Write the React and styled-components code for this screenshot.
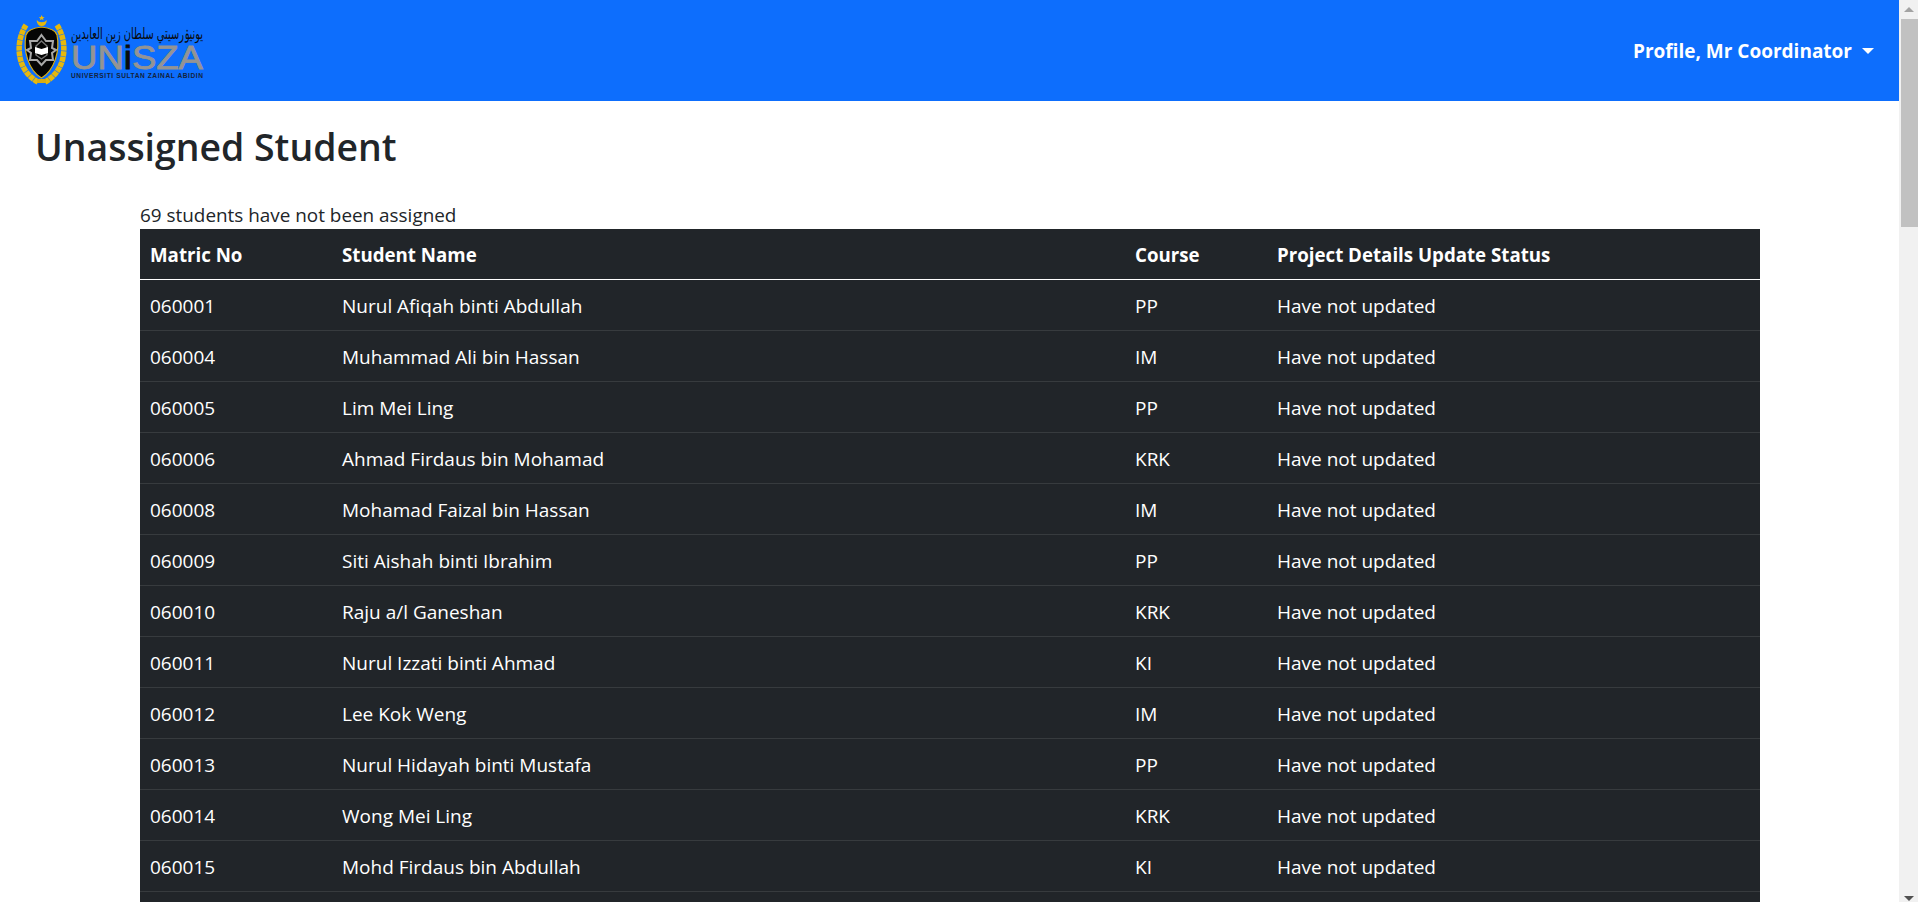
import React from 'react';
import styled, { createGlobalStyle } from 'styled-components';

const GlobalStyle = createGlobalStyle`
  html, body {
    margin: 0;
    padding: 0;
    background: #fff;
    font-family: "Open Sans", "Noto Sans", sans-serif;
    color: #212529;
  }
  *, *::before, *::after { box-sizing: border-box; }
`;

const Page = styled.div`
  display: flex;
  height: 100vh;
  overflow: hidden;
`;

const Scroller = styled.div`
  flex: 1;
  min-width: 0;
  overflow-y: auto;
`;

const Rail = styled.aside`
  width: 19px;
  flex-shrink: 0;
  display: flex;
  flex-direction: column;
  background: #f1f1f1;
`;

const RailArrow = styled.div`
  height: 19px;
  flex-shrink: 0;
  display: flex;
  justify-content: center;
  align-items: ${p => (p.$down ? 'flex-end' : 'center')};
  padding-bottom: ${p => (p.$down ? '1px' : '0')};
  &::before {
    content: '';
    border-left: 5px solid transparent;
    border-right: 5px solid transparent;
    border-top: ${p => (p.$down ? '5px solid #505050' : '0')};
    border-bottom: ${p => (p.$down ? '0' : '5px solid #a3a3a3')};
  }
`;

const RailThumb = styled.div`
  height: 208px;
  margin-left: 2px;
  flex-shrink: 0;
  background: #c1c1c1;
`;

const RailGap = styled.div`
  flex: 1;
`;

const NavBar = styled.nav`
  height: 101px;
  background: #0d6efd;
  display: flex;
  align-items: center;
  justify-content: space-between;
  padding: 0 25px 0 14px;
`;

const ProfileToggle = styled.button`
  display: flex;
  align-items: center;
  background: none;
  border: 0;
  padding: 0;
  color: #fff;
  font: 700 19px "Open Sans", sans-serif;
  &::after {
    content: '';
    margin-left: 10px;
    border-top: 6px solid #fff;
    border-left: 6px solid transparent;
    border-right: 6px solid transparent;
  }
`;

const Main = styled.main`
  padding: 0 36px;
`;

const Title = styled.h1`
  margin: 0 0 0 -1px;
  padding-top: 22px;
  font-size: 37.4px;
  line-height: 48px;
  font-weight: 600;
`;

const Content = styled.section`
  margin: 30px 0 0 104px;
  width: 1620px;
`;

const Count = styled.div`
  font-size: 18.9px;
  line-height: 28px;
`;

const Table = styled.table`
  width: 100%;
  border-collapse: separate;
  border-spacing: 0;
  background: #212529;
  color: #fff;
  font-size: 19px;
  table-layout: fixed;
`;

const Head = styled.th`
  height: 51px;
  padding: 0 10px;
  text-align: left;
  font-size: 18.7px;
  font-weight: 700;
  border-bottom: 1px solid #fff;
  width: ${p => p.$w};
`;

const Cell = styled.td`
  height: 51px;
  padding: 1px 10px 0;
  border-bottom: 1px solid #373b3e;
`;

const students = [
  ['060001', 'Nurul Afiqah binti Abdullah', 'PP'],
  ['060004', 'Muhammad Ali bin Hassan', 'IM'],
  ['060005', 'Lim Mei Ling', 'PP'],
  ['060006', 'Ahmad Firdaus bin Mohamad', 'KRK'],
  ['060008', 'Mohamad Faizal bin Hassan', 'IM'],
  ['060009', 'Siti Aishah binti Ibrahim', 'PP'],
  ['060010', 'Raju a/l Ganeshan', 'KRK'],
  ['060011', 'Nurul Izzati binti Ahmad', 'KI'],
  ['060012', 'Lee Kok Weng', 'IM'],
  ['060013', 'Nurul Hidayah binti Mustafa', 'PP'],
  ['060014', 'Wong Mei Ling', 'KRK'],
  ['060015', 'Mohd Firdaus bin Abdullah', 'KI'],
];

// viewBox is in page pixels, so the numbers below read straight off the screenshot
const UniszaLogo = () => (
  <svg width="192" height="73" viewBox="14 14 192 73">
    <path d="M26 25 C15 42 16 70 38 82" fill="none" stroke="#e6b80c" strokeWidth="5.5" strokeDasharray="5 .5" />
    <path d="M57 25 C68 42 67 70 45 82" fill="none" stroke="#e6b80c" strokeWidth="5.5" strokeDasharray="5 .5" />
    <rect x="37" y="79" width="9" height="4" fill="#d9ad12" />
    <path d="M41.5 27 C33 28 27 31 26 35 C23 50 28 70 41.5 78 C55 70 60 50 57 35 C56 31 50 28 41.5 27Z" fill="#050505" stroke="#d9ad12" strokeWidth="1.2" />
    <path d="M41.5 35 L46 41 L53 41 L52 48 L56 50 L52 53 L53 60 L46 60 L41.5 65 L37 60 L30 60 L31 53 L27 50 L31 48 L30 41 L37 41Z" fill="none" stroke="#a8a8a8" strokeWidth="2" />
    <path d="M41.5 41 L47 46 L47 55 L41.5 59 L36 55 L36 46Z" fill="none" stroke="#777" strokeWidth="1.4" />
    <path d="M35 47 L41.5 49 L48 47 L48 53 L41.5 55 L35 53Z" fill="#fff" />
    <path d="M36.8 20 A5 5 0 1 0 46.6 20 A5.5 4 0 0 1 36.8 20Z" fill="#e6b80c" />
    <path d="M41.7 15 L42.6 17 L44.6 17.2 L43 18.4 L43.6 20.3 L41.7 19.2 L39.8 20.3 L40.4 18.4 L38.8 17.2 L40.8 17Z" fill="#e6b80c" />
    <text x="71" y="39" fontFamily="DejaVu Sans" fontSize="16" fill="#0a0a0a" textLength="132" lengthAdjust="spacingAndGlyphs">يونيۏرسيتي سلطان زين العابدين</text>
    <text x="71" y="69" fontFamily="Liberation Sans" fontSize="33" fill="#949494" stroke="#949494" strokeWidth=".8" textLength="132" lengthAdjust="spacingAndGlyphs">UN<tspan fill="#0a0a0a" stroke="#0a0a0a">i</tspan>SZA</text>
    <text x="71" y="78" fontFamily="Liberation Sans" fontWeight="700" fontSize="6.6" fill="#14233c" textLength="132">UNIVERSITI SULTAN ZAINAL ABIDIN</text>
  </svg>
);

const App = () => (
  <Page>
    <GlobalStyle />
    <Scroller>
      <NavBar>
        <UniszaLogo />
        <ProfileToggle>Profile, Mr Coordinator</ProfileToggle>
      </NavBar>
      <Main>
        <Title>Unassigned Student</Title>
        <Content>
          <Count>69 students have not been assigned</Count>
          <Table>
            <thead>
              <tr>
                <Head $w="192px">Matric No</Head>
                <Head $w="793px">Student Name</Head>
                <Head $w="142px">Course</Head>
                <Head>Project Details Update Status</Head>
              </tr>
            </thead>
            <tbody>
              {students.map(([matric, name, course]) => (
                <tr key={matric}>
                  <Cell>{matric}</Cell>
                  <Cell>{name}</Cell>
                  <Cell>{course}</Cell>
                  <Cell>Have not updated</Cell>
                </tr>
              ))}
              <tr>
                <Cell />
                <Cell />
                <Cell />
                <Cell />
              </tr>
            </tbody>
          </Table>
        </Content>
      </Main>
    </Scroller>
    <Rail>
      <RailArrow />
      <RailThumb />
      <RailGap />
      <RailArrow $down />
    </Rail>
  </Page>
);

export default App;
